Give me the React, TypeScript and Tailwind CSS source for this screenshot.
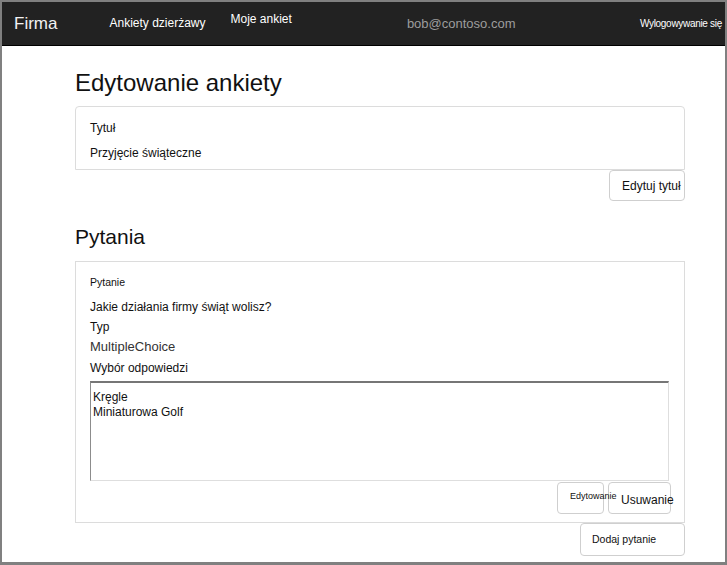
import React from 'react';

function NavLink({ label, className }: { label: string; className?: string }): React.ReactElement {
  return <span className={`text-[12px] text-white ${className ?? ''}`}>{label}</span>;
}

function Button({
  label,
  className,
  textClass,
}: {
  label: string;
  className: string;
  textClass: string;
}): React.ReactElement {
  return (
    <button
      type="button"
      className={`flex items-center overflow-visible whitespace-nowrap rounded-[4px] border border-[#cfcfcf] bg-transparent text-[#111] ${className}`}
    >
      <span className={textClass}>{label}</span>
    </button>
  );
}

export default function App(): React.ReactElement {
  return (
    <div
      className="flex h-[565px] w-[727px] flex-col bg-[#808080] pt-[2px] pr-[2px] pb-[3px] pl-[2px]"
      style={{ fontFamily: '"Liberation Sans", Arial, sans-serif' }}
    >
      <div className="flex flex-1 flex-col bg-white">
        {/* Top navigation */}
        <nav className="flex h-[44px] items-center border-b border-black bg-[#222]">
          <span className="ml-[12px] text-[17px] text-[#f2f2f2]">Firma</span>
          <NavLink label="Ankiety dzierżawy" className="ml-[52px] mt-[-2px]" />
          <NavLink label="Moje ankiet" className="ml-[25px] mt-[-9px]" />
          <span className="ml-[115px] text-[13px] text-[#9d9d9d]">bob@contoso.com</span>
          <span className="ml-auto mr-[3px] text-[10px] tracking-[-0.3px] text-white">Wylogowywanie się</span>
        </nav>

        <main className="ml-[73px] w-[610px]">
          <h1 className="mt-[25px] text-[24px] leading-none text-[#111]">Edytowanie ankiety</h1>

          <section className="mt-[11px] rounded-t-[4px] border border-[#dcdcdc] pt-[13px] pr-[14px] pb-[8px] pl-[14px] text-[12px] text-[#111]">
            <div className="leading-[16px]">Tytuł</div>
            <div className="mt-[9px] leading-[16px]">Przyjęcie świąteczne</div>
          </section>
          <div className="flex justify-end">
            <Button
              label="Edytuj tytuł"
              className="h-[31px] w-[76px] pl-[12px]"
              textClass="text-[12px]"
            />
          </div>

          <h2 className="mt-[25px] text-[21px] leading-none text-[#111]">Pytania</h2>

          <section className="mt-[14px] border border-[#dcdcdc] pt-[10px] pr-[13px] pb-[8px] pl-[14px] text-[12px] text-[#111]">
            <div className="text-[10.5px] leading-[20px]">Pytanie</div>
            <div className="mt-[5px] leading-[20px]">Jakie działania firmy świąt wolisz?</div>
            <div className="leading-[20px]">Typ</div>
            <div className="text-[13px] leading-[20px] text-[#333]">MultipleChoice</div>
            <div className="mt-[1px] leading-[20px]">Wybór odpowiedzi</div>
            <div className="mt-[3px] h-[100px] w-[579px] border-t-2 border-r border-b border-l border-t-[#767676] border-r-[#dedede] border-b-[#dedede] border-l-[#8c8c8c] pt-[7px] pl-[2px] leading-[15px]">
              <div>Kręgle</div>
              <div>Miniaturowa Golf</div>
            </div>
            <div className="mt-[1px] flex justify-end gap-[4px]">
              <Button
                label="Edytowanie"
                className="relative z-10 h-[32px] w-[47px] pl-[12px]"
                textClass="mt-[-3px] text-[9px]"
              />
              <Button
                label="Usuwanie"
                className="h-[32px] w-[63px] pl-[12px]"
                textClass="mt-[4px] text-[12px]"
              />
            </div>
          </section>
          <div className="flex justify-end">
            <Button
              label="Dodaj pytanie"
              className="h-[33px] w-[105px] pl-[11px]"
              textClass="text-[10.5px]"
            />
          </div>
        </main>
      </div>
    </div>
  );
}
